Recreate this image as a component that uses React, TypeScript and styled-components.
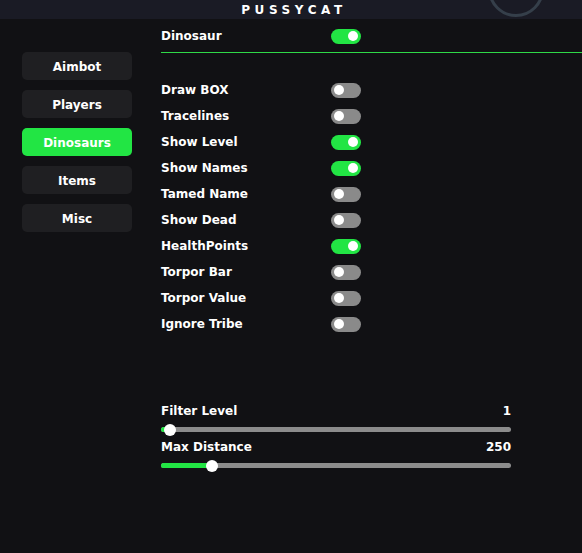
import styled, { createGlobalStyle } from "styled-components";

const GlobalStyle = createGlobalStyle`
  html, body {
    margin: 0;
    padding: 0;
    background: #111114;
  }
  body {
    font-family: "DejaVu Sans", Verdana, sans-serif;
    color: #ffffff;
  }
`;

const Page = styled.div`
  width: 582px;
  height: 553px;
  background: #111114;
  overflow: hidden;
  display: flex;
  flex-direction: column;
`;

const Header = styled.div`
  position: relative;
  height: 19px;
  background: #1a1b25;
  display: flex;
  align-items: center;
  justify-content: center;
  overflow: hidden;
  flex-shrink: 0;
`;

const Title = styled.div`
  font-size: 12px;
  font-weight: bold;
  letter-spacing: 4.6px;
  padding-left: 6px;
  margin-top: 1px;
`;

const Ring = styled.div`
  position: absolute;
  left: 488px;
  top: -39px;
  width: 50px;
  height: 50px;
  border-radius: 50%;
  border: 3px solid #353f4a;
`;

const Body = styled.div`
  flex: 1;
  display: flex;
`;

const Sidebar = styled.div`
  width: 110px;
  padding: 33px 0 0 22px;
  display: flex;
  flex-direction: column;
  gap: 10px;
`;

const TabButton = styled.div<{ $active?: boolean }>`
  height: 28px;
  border-radius: 5px;
  background: ${(p) => (p.$active ? "#22e544" : "#1f1f22")};
  color: #ffffff;
  font-size: 12px;
  font-weight: bold;
  display: flex;
  align-items: center;
  justify-content: center;
  padding-top: 1px;
  box-sizing: border-box;
`;

const Content = styled.div`
  flex: 1;
  padding-left: 29px;
  display: flex;
  flex-direction: column;
`;

const HeadRow = styled.div`
  height: 33px;
  display: flex;
  align-items: center;
  padding-top: 1px;
  box-sizing: border-box;
`;

const Divider = styled.div`
  height: 1px;
  background: #2fd947;
`;

const Row = styled.div`
  height: 26px;
  display: flex;
  align-items: center;
`;

const Label = styled.div`
  width: 170px;
  font-size: 12px;
  font-weight: bold;
`;

const ToggleList = styled.div`
  margin-top: 24px;
  display: flex;
  flex-direction: column;
`;

const Track = styled.div<{ $on?: boolean }>`
  width: 30px;
  height: 15px;
  border-radius: 8px;
  background: ${(p) => (p.$on ? "#22e544" : "#8a8a8a")};
  display: flex;
  align-items: center;
  justify-content: ${(p) => (p.$on ? "flex-end" : "flex-start")};
  padding: 0 3px;
  box-sizing: border-box;
`;

const Knob = styled.div`
  width: 10px;
  height: 10px;
  border-radius: 50%;
  background: #ffffff;
`;

const Sliders = styled.div`
  margin-top: 66px;
  width: 350px;
  display: flex;
  flex-direction: column;
`;

const SliderHead = styled.div`
  display: flex;
  justify-content: space-between;
  font-size: 12px;
  font-weight: bold;
  height: 16px;
  align-items: center;
`;

const SliderBlock = styled.div`
  height: 36px;
  display: flex;
  flex-direction: column;
`;

const Rail = styled.div`
  position: relative;
  margin-top: 8px;
  height: 5px;
  border-radius: 3px;
  background: #8c8c8c;
`;

const Fill = styled.div`
  height: 100%;
  border-radius: 3px;
  background: #22e544;
`;

const Thumb = styled.div`
  position: absolute;
  top: 50%;
  width: 12px;
  height: 12px;
  margin: -6px 0 0 -6px;
  border-radius: 50%;
  background: #ffffff;
`;

const Toggle = ({ on }: { on?: boolean }) => (
  <Track $on={on}>
    <Knob />
  </Track>
);

const Slider = ({ label, value, pct }: { label: string; value: string; pct: number }) => (
  <SliderBlock>
    <SliderHead>
      <span>{label}</span>
      <span>{value}</span>
    </SliderHead>
    <Rail>
      <Fill style={{ width: `${pct}%` }} />
      <Thumb style={{ left: `${pct}%` }} />
    </Rail>
  </SliderBlock>
);

const tabs = ["Aimbot", "Players", "Dinosaurs", "Items", "Misc"];

const options: [string, boolean][] = [
  ["Draw BOX", false],
  ["Tracelines", false],
  ["Show Level", true],
  ["Show Names", true],
  ["Tamed Name", false],
  ["Show Dead", false],
  ["HealthPoints", true],
  ["Torpor Bar", false],
  ["Torpor Value", false],
  ["Ignore Tribe", false],
];

export default function App() {
  return (
    <>
      <GlobalStyle />
      <Page>
        <Header>
          <Title>PUSSYCAT</Title>
          <Ring />
        </Header>
        <Body>
          <Sidebar>
            {tabs.map((t) => (
              <TabButton key={t} $active={t === "Dinosaurs"}>
                {t}
              </TabButton>
            ))}
          </Sidebar>
          <Content>
            <HeadRow>
              <Label>Dinosaur</Label>
              <Toggle on />
            </HeadRow>
            <Divider />
            <ToggleList>
              {options.map(([name, on]) => (
                <Row key={name}>
                  <Label>{name}</Label>
                  <Toggle on={on} />
                </Row>
              ))}
            </ToggleList>
            <Sliders>
              <Slider label="Filter Level" value="1" pct={2.6} />
              <Slider label="Max Distance" value="250" pct={14.6} />
            </Sliders>
          </Content>
        </Body>
      </Page>
    </>
  );
}
